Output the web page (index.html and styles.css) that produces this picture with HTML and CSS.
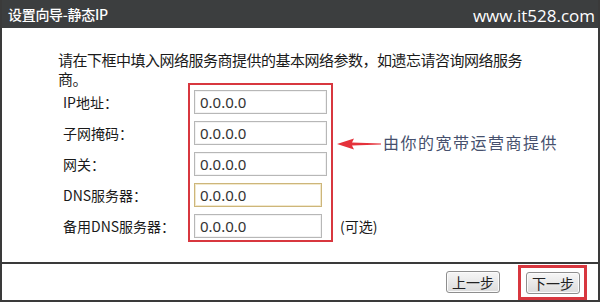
FILE: index.html
```html
<!DOCTYPE html>
<html>
<head>
    <meta charset="UTF-8">
    <title>设置向导-静态IP</title>
    <link rel="stylesheet" href="styles.css">
</head>
<body>
    <div class="wizard">
        <!-- Title bar -->
        <div class="title-bar">
            <span class="title">设置向导-静态IP</span>
            <span class="site">www.it528.com</span>
        </div>

        <div class="content">
            <p class="intro">请在下框中填入网络服务商提供的基本网络参数，如遗忘请咨询网络服务商。</p>

            <div class="form-area">
                <div class="labels">
                    <div class="label">IP地址：</div>
                    <div class="label">子网掩码：</div>
                    <div class="label">网关：</div>
                    <div class="label">DNS服务器：</div>
                    <div class="label">备用DNS服务器：</div>
                </div>
                <div class="fields">
                    <input class="field" type="text" value="0.0.0.0">
                    <input class="field" type="text" value="0.0.0.0">
                    <input class="field" type="text" value="0.0.0.0">
                    <input class="field short focused" type="text" value="0.0.0.0">
                    <input class="field short" type="text" value="0.0.0.0">
                </div>
                <div class="notes">
                    <div class="note">
                        <svg class="arrow" width="44" height="12" viewBox="0 0 44 12">
                            <polygon points="0,6 17,0.5 15,4.6 44,5.4 44,6.6 15,7.4 17,11.5" fill="#e5323b"/>
                        </svg>
                        <span class="note-text">由你的宽带运营商提供</span>
                    </div>
                    <div class="optional">(可选)</div>
                </div>
            </div>
        </div>

        <!-- Buttons -->
        <div class="footer">
            <button class="btn">上一步</button>
            <div class="highlight">
                <button class="btn">下一步</button>
            </div>
        </div>
    </div>
</body>
</html>
```

FILE: styles.css
```css
body {
    margin: 0;
    padding: 0;
    background-color: white;
    font-family: "Noto Sans CJK SC", "Noto Sans", sans-serif;
    color: #222;
}
.wizard {
    width: 596px;
    height: 302px;
    border-left: 2px solid #3a3a3a;
    border-right: 2px solid #3a3a3a;
    display: flex;
    flex-direction: column;
}
.title-bar {
    height: 28px;
    background-color: #3c3e3f;
    display: flex;
    justify-content: space-between;
    align-items: center;
    padding: 0 3px 0 6px;
    color: white;
}
.title {
    font-size: 14px;
    letter-spacing: -0.3px;
    font-weight: 500;
}
.site {
    font-family: "Open Sans", "Noto Sans", sans-serif;
    font-size: 17px;
    margin-top: 2px;
}
.content {
    flex: 1;
    padding: 22px 0 0 56px;
}
.intro {
    margin: 0;
    width: 471px;
    font-size: 15px;
    line-height: 19px;
    letter-spacing: -0.5px;
    color: #1a1a1a;
}
.form-area {
    display: flex;
    margin-top: -5px;
}
.labels {
    width: 125px;
    padding: 7px 0 0 5px;
    display: flex;
    flex-direction: column;
    gap: 7px;
}
.label {
    height: 24px;
    line-height: 24px;
    font-size: 14px;
    color: #1a1a1a;
}
.fields {
    border: 2px solid #d8373f;
    padding: 5px 4px 2px 4px;
    display: flex;
    flex-direction: column;
    gap: 7px;
}
.field {
    box-sizing: border-box;
    width: 133px;
    height: 24px;
    margin: 0;
    padding: 0 0 0 5px;
    border: 1px solid #b7b7b7;
    box-shadow: inset 0 0 0 1px #f3f3f3;
    font-family: "Noto Sans", sans-serif;
    font-size: 15px;
    color: #333;
    background: white;
    outline: none;
}
.field.short {
    width: 128px;
}
.field.focused {
    border-color: #cdb67a;
    box-shadow: inset 0 0 0 1px #f2e8cc;
}
.notes {
    display: flex;
    flex-direction: column;
    padding-bottom: 4px;
}
.note {
    display: flex;
    align-items: center;
    margin-top: 47px;
    margin-left: 4px;
}
.arrow {
    display: block;
    margin-top: 4px;
}
.note-text {
    margin-left: 2px;
    font-size: 16px;
    letter-spacing: 1.5px;
    color: #46506d;
}
.optional {
    margin-top: auto;
    margin-left: 7px;
    height: 24px;
    line-height: 24px;
    font-size: 14px;
    color: #1a1a1a;
}
.footer {
    height: 36px;
    border-top: 2px solid #3a3a3a;
    border-bottom: 2px solid #3a3a3a;
    display: flex;
    justify-content: flex-end;
    align-items: center;
    gap: 18px;
    padding-right: 11px;
}
.highlight {
    border: 3px solid #d8373f;
    padding: 4px 4px 3px 5px;
    margin-top: 1px;
}
.btn {
    width: 54px;
    height: 22px;
    padding: 0;
    border: 1px solid #8e8e8e;
    border-radius: 3px;
    background: linear-gradient(#f6f6f6, #dcdcdc);
    box-shadow: inset 0 0 0 1px #fbfbfb;
    font-family: "Noto Sans CJK SC", sans-serif;
    font-size: 14px;
    color: #222;
    display: block;
}
```
